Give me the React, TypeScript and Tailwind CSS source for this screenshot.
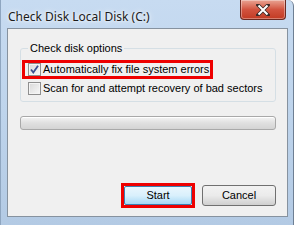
import React from "react";

const titleFont = { fontFamily: '"Segoe UI", "Noto Sans", "Liberation Sans", sans-serif' };
const bodyFont = { fontFamily: '"Liberation Sans", Arial, sans-serif' };

function Checkbox({ checked }: { checked?: boolean }) {
  return (
    <span className="flex h-[13px] w-[13px] shrink-0 items-center justify-center border border-[#8f8f8f] bg-gradient-to-br from-[#d8d8d8] to-[#f8f8f8] shadow-[inset_0_0_0_1px_#f4f4f4]">
      {checked && (
        <svg width="11" height="11" viewBox="0 0 11 11">
          <path d="M2 5.5 L4.3 8.5 L9 1.8" fill="none" stroke="#3a4f8f" strokeWidth="1.8" />
        </svg>
      )}
    </span>
  );
}

export default function App() {
  return (
    <div className="flex h-[225px] w-[294px] flex-col overflow-hidden rounded-tr-[6px] border-x border-l-[#8fa6c0] border-r-[#6e7f93] bg-gradient-to-b from-[#c7dbf1] via-[#bed4ec] to-[#b3cae4] text-black">
      {/* title bar */}
      <div className="flex h-[28px] shrink-0 items-start" style={titleFont}>
        <span className="pl-[7px] pt-[9px] text-[12px] leading-[15px] text-[#1b1b1b] [text-shadow:0_0_6px_#ffffff,0_0_3px_#ffffff]">
          Check Disk Local Disk (C:)
        </span>
        <button className="ml-auto mr-[7px] flex h-[20px] w-[46px] items-center justify-center rounded-b-[4px] border border-t-0 border-[#6b2a22] bg-gradient-to-b from-[#e8a393] via-[#d2533f] to-[#c23a22] shadow-[inset_0_0_0_1px_rgba(255,255,255,0.35)]">
          <svg width="14" height="12" viewBox="0 0 14 12">
            <path
              d="M2 1 L12 11 M12 1 L2 11"
              fill="none"
              stroke="#3b2a28"
              strokeWidth="3.6"
              strokeLinecap="square"
            />
            <path d="M2.5 1.5 L11.5 10.5 M11.5 1.5 L2.5 10.5" fill="none" stroke="#ffffff" strokeWidth="2" />
          </svg>
        </button>
      </div>

      {/* client area */}
      <div
        className="ml-[6px] mr-[5px] flex h-[189px] shrink-0 flex-col border border-[#86929f] bg-[#f0f0f0] pl-[12px] pr-[11px] text-[11px]"
        style={bodyFont}
      >
        <fieldset className="mt-[12px] h-[61px] rounded-[3px] border border-[#d5dfe5] pl-[1px] pr-[7px]">
          <legend className="ml-[6px] px-[2px] text-[11px] leading-[14px]">Check disk options</legend>
          <div className="mt-[5px] flex h-[19px] w-[191px] items-center gap-[2px] whitespace-nowrap border-[3px] border-[#ee0000] pl-[3px]">
            <Checkbox checked />
            <span className="leading-[13px]">Automatically fix file system errors</span>
          </div>
          <div className="mt-[3px] flex items-center gap-[2px] whitespace-nowrap pl-[6px]">
            <Checkbox />
            <span className="leading-[13px]">Scan for and attempt recovery of bad sectors</span>
          </div>
        </fieldset>

        <div className="mt-[14px] h-[14px] rounded-[3px] border border-[#a9a9a9] bg-gradient-to-b from-[#f5f5f5] via-[#e0e0e0] to-[#d4d4d4] shadow-[inset_0_1px_0_#ffffff]" />

        <div className="mt-auto mb-[8px] flex justify-end gap-[7px]">
          <div className="border-[3px] border-[#ee0000]">
            <button className="flex h-[19px] w-[68px] items-center justify-center rounded-[2px] border border-[#3c7fb1] bg-gradient-to-b from-[#eaf6fd] via-[#d9f0fc] to-[#a7d9f5] text-[11px] leading-none">
              Start
            </button>
          </div>
          <button className="mt-[2px] flex h-[21px] w-[74px] items-center justify-center rounded-[3px] border border-[#707070] bg-gradient-to-b from-[#f2f2f2] via-[#ebebeb] to-[#cfcfcf] text-[11px] leading-none">
            Cancel
          </button>
        </div>
      </div>
    </div>
  );
}
